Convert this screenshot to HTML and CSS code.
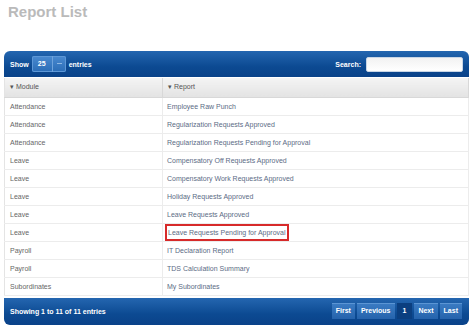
FILE: index.html
```html
<!DOCTYPE html>
<html>
<head>
<title>Report List</title>
<link rel="stylesheet" href="styles.css">
</head>
<body>
  <h1 class="page-title">Report List</h1>
  <div class="report-panel">
    <div class="toolbar">
      <div class="length">
        <span>Show</span>
        <span class="select"><span class="select-val">25</span><span class="select-arrow"></span></span>
        <span>entries</span>
      </div>
      <div class="search">
        <span>Search:</span>
        <span class="search-box"></span>
      </div>
    </div>
    <table class="report-table">
      <thead>
        <tr><th class="col-module">&#9662; Module</th><th>&#9662; Report</th></tr>
      </thead>
      <tbody>
        <tr><td>Attendance</td><td class="link">Employee Raw Punch</td></tr>
        <tr><td>Attendance</td><td class="link">Regularization Requests Approved</td></tr>
        <tr><td>Attendance</td><td class="link">Regularization Requests Pending for Approval</td></tr>
        <tr><td>Leave</td><td class="link">Compensatory Off Requests Approved</td></tr>
        <tr><td>Leave</td><td class="link">Compensatory Work Requests Approved</td></tr>
        <tr><td>Leave</td><td class="link">Holiday Requests Approved</td></tr>
        <tr><td>Leave</td><td class="link">Leave Requests Approved</td></tr>
        <tr><td>Leave</td><td class="link"><span class="marked">Leave Requests Pending for Approval</span></td></tr>
        <tr><td>Payroll</td><td class="link">IT Declaration Report</td></tr>
        <tr><td>Payroll</td><td class="link">TDS Calculation Summary</td></tr>
        <tr><td>Subordinates</td><td class="link">My Subordinates</td></tr>
      </tbody>
    </table>
    <div class="footer">
      <span>Showing 1 to 11 of 11 entries</span>
      <div class="pager">
        <span class="pg">First</span>
        <span class="pg">Previous</span>
        <span class="pg active">1</span>
        <span class="pg">Next</span>
        <span class="pg">Last</span>
      </div>
    </div>
  </div>
</body>
</html>
```

FILE: styles.css
```css
* {
  margin: 0;
  padding: 0;
  box-sizing: border-box;
}

body {
  background: #fff;
  font-family: "Liberation Sans", Arial, sans-serif;
  width: 474px;
  height: 328px;
  overflow: hidden;
}

.page-title {
  font-size: 15px;
  font-weight: bold;
  color: #bababa;
  line-height: 17px;
  margin: 3px 0 0 8px;
}

.report-panel {
  margin: 31px 5px 0 4px;
}

.toolbar {
  height: 26px;
  display: flex;
  align-items: center;
  justify-content: space-between;
  padding: 0 6px;
  border-radius: 6px 6px 0 0;
  background: linear-gradient(#2466b0, #0c4a92 60%, #0a4289);
  color: #fff;
  font-size: 7px;
  font-weight: bold;
}

.length {
  display: flex;
  align-items: center;
  gap: 3px;
}

.select {
  display: flex;
  height: 16px;
  width: 34px;
  border-radius: 2px;
  background: linear-gradient(#4a8ad0, #2a6cb6);
  box-shadow: inset 0 0 0 1px #5d97d6;
}

.select-val {
  width: 20px;
  line-height: 16px;
  text-align: center;
  font-size: 7px;
}

.select-arrow {
  flex: 1;
  border-left: 1px solid #6fa3db;
  position: relative;
}

.select-arrow::after {
  content: "";
  position: absolute;
  left: 4px;
  top: 7px;
  width: 5px;
  border-top: 1px solid #8fb8e3;
}

.search {
  display: flex;
  align-items: center;
  gap: 5px;
}

.search-box {
  width: 97px;
  height: 15px;
  border-radius: 2px;
  background: linear-gradient(#f2f2f2, #fff);
  border: 1px solid #c9d6e6;
}

.report-table {
  width: 100%;
  border-collapse: collapse;
  margin-top: 1px;
  font-size: 7px;
  color: #666;
  border-left: 1px solid #e4e4e4;
  border-right: 1px solid #e4e4e4;
}

.report-table th {
  height: 19px;
  text-align: left;
  font-weight: normal;
  color: #555;
  padding-left: 5px;
  background: linear-gradient(#f4f4f4, #e3e3e3);
  border-right: 1px solid #d8d8d8;
  border-bottom: 1px solid #d8d8d8;
}

.report-table .col-module {
  width: 158px;
}

.report-table td {
  height: 18px;
  padding-left: 5px;
  border-bottom: 1px solid #ececec;
  border-right: 1px solid #ececec;
}

.report-table td.link {
  color: #5b6b85;
  padding-left: 4px;
}

.marked {
  display: inline-block;
  padding: 3px 1px 3px 1px;
  margin-left: -2px;
  border: 2px solid #d72a2a;
}

.footer {
  height: 27px;
  margin-top: 2px;
  display: flex;
  align-items: center;
  justify-content: space-between;
  padding: 0 7px 0 6px;
  border-radius: 0 0 6px 6px;
  background: linear-gradient(#2466b0, #0c4a92 60%, #0a4289);
  color: #fff;
  font-size: 7px;
  font-weight: bold;
}

.pager {
  display: flex;
  gap: 2px;
}

.pg {
  height: 16px;
  line-height: 16px;
  padding: 0 4px;
  background: linear-gradient(#3b7cc4, #2563ac);
  box-shadow: inset 0 1px 0 #5b95d4;
}

.pg.active {
  background: #0b3f80;
  box-shadow: none;
  padding: 0 6px;
}
```
